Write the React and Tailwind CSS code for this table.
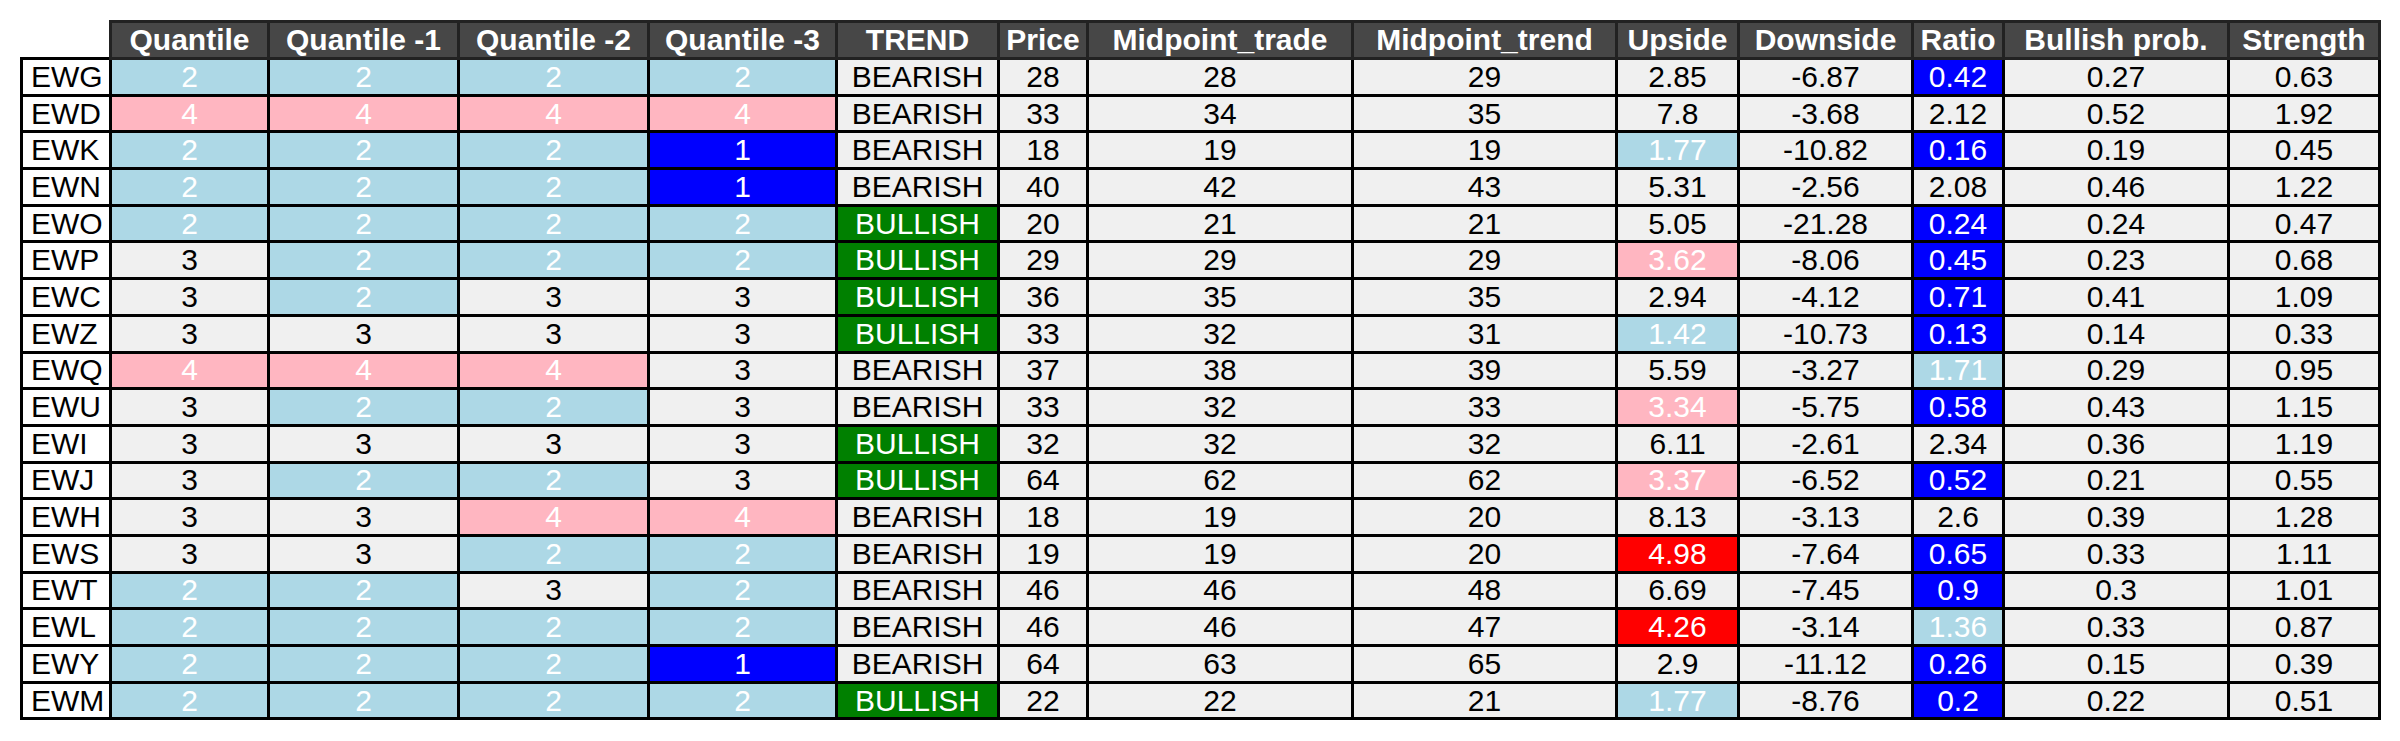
const columns = [
  { label: "Quantile", w: "w-[158px]" },
  { label: "Quantile -1", w: "w-[190px]" },
  { label: "Quantile -2", w: "w-[190px]" },
  { label: "Quantile -3", w: "w-[188px]" },
  { label: "TREND", w: "w-[162px]" },
  { label: "Price", w: "w-[89px]" },
  { label: "Midpoint_trade", w: "w-[265px]" },
  { label: "Midpoint_trend", w: "w-[264px]" },
  { label: "Upside", w: "w-[122px]" },
  { label: "Downside", w: "w-[174px]" },
  { label: "Ratio", w: "w-[91px]" },
  { label: "Bullish prob.", w: "w-[225px]" },
  { label: "Strength", w: "w-[151px]" },
];

// ticker, q, q-1, q-2, q-3, trend, price, mid trade, mid trend, upside, downside, ratio, bullish, strength
const rows = [
  ["EWG", 2, 2, 2, 2, "BEARISH", 28, 28, 29, "2.85", "-6.87", "0.42", "0.27", "0.63"],
  ["EWD", 4, 4, 4, 4, "BEARISH", 33, 34, 35, "7.8", "-3.68", "2.12", "0.52", "1.92"],
  ["EWK", 2, 2, 2, 1, "BEARISH", 18, 19, 19, "1.77", "-10.82", "0.16", "0.19", "0.45"],
  ["EWN", 2, 2, 2, 1, "BEARISH", 40, 42, 43, "5.31", "-2.56", "2.08", "0.46", "1.22"],
  ["EWO", 2, 2, 2, 2, "BULLISH", 20, 21, 21, "5.05", "-21.28", "0.24", "0.24", "0.47"],
  ["EWP", 3, 2, 2, 2, "BULLISH", 29, 29, 29, "3.62", "-8.06", "0.45", "0.23", "0.68"],
  ["EWC", 3, 2, 3, 3, "BULLISH", 36, 35, 35, "2.94", "-4.12", "0.71", "0.41", "1.09"],
  ["EWZ", 3, 3, 3, 3, "BULLISH", 33, 32, 31, "1.42", "-10.73", "0.13", "0.14", "0.33"],
  ["EWQ", 4, 4, 4, 3, "BEARISH", 37, 38, 39, "5.59", "-3.27", "1.71", "0.29", "0.95"],
  ["EWU", 3, 2, 2, 3, "BEARISH", 33, 32, 33, "3.34", "-5.75", "0.58", "0.43", "1.15"],
  ["EWI", 3, 3, 3, 3, "BULLISH", 32, 32, 32, "6.11", "-2.61", "2.34", "0.36", "1.19"],
  ["EWJ", 3, 2, 2, 3, "BULLISH", 64, 62, 62, "3.37", "-6.52", "0.52", "0.21", "0.55"],
  ["EWH", 3, 3, 4, 4, "BEARISH", 18, 19, 20, "8.13", "-3.13", "2.6", "0.39", "1.28"],
  ["EWS", 3, 3, 2, 2, "BEARISH", 19, 19, 20, "4.98", "-7.64", "0.65", "0.33", "1.11"],
  ["EWT", 2, 2, 3, 2, "BEARISH", 46, 46, 48, "6.69", "-7.45", "0.9", "0.3", "1.01"],
  ["EWL", 2, 2, 2, 2, "BEARISH", 46, 46, 47, "4.26", "-3.14", "1.36", "0.33", "0.87"],
  ["EWY", 2, 2, 2, 1, "BEARISH", 64, 63, 65, "2.9", "-11.12", "0.26", "0.15", "0.39"],
  ["EWM", 2, 2, 2, 2, "BULLISH", 22, 22, 21, "1.77", "-8.76", "0.2", "0.22", "0.51"],
];

const tones = {
  plain: "bg-[#f0f0f0] text-black",
  sky: "bg-[#add8e6] text-white",
  pink: "bg-[#ffb6c1] text-white",
  blue: "bg-[#0000ff] text-white",
  red: "bg-[#ff0000] text-white",
  green: "bg-[#008000] text-white",
};

const quantileTone = { 1: "blue", 2: "sky", 3: "plain", 4: "pink" };

function upsideTone(v) {
  const n = parseFloat(v);
  if (n < 2) return "sky";
  if (n < 3.7 && n > 3) return "pink";
  if (n > 4 && n < 5) return "red";
  return "plain";
}

function ratioTone(v) {
  const n = parseFloat(v);
  if (n < 1) return "blue";
  if (n < 2) return "sky";
  return "plain";
}

function Cell({ tone = "plain", children }) {
  return (
    <td className={`border-[3px] border-black text-center p-0 ${tones[tone]}`}>{children}</td>
  );
}

export default function App() {
  return (
    <div className="bg-white w-[2400px] h-[741px] pt-[20px] pl-[20px] font-['Liberation_Sans',Arial,sans-serif]">
      <table className="border-collapse table-fixed text-[30px] leading-none">
        <thead>
          <tr className="h-[37px]">
            <th className="w-[89px] p-0 border-0 bg-white"></th>
            {columns.map((c) => (
              <th
                key={c.label}
                className={`${c.w} p-0 border-[3px] border-[#222] bg-[#474747] text-white font-bold whitespace-nowrap`}
              >
                {c.label}
              </th>
            ))}
          </tr>
        </thead>
        <tbody>
          {rows.map((r) => (
            <tr key={r[0]} className="h-[36.7px]">
              <td className="border-[3px] border-black bg-white text-black text-left pl-[8px] p-0">{r[0]}</td>
              {[1, 2, 3, 4].map((i) => (
                <Cell key={i} tone={quantileTone[r[i]]}>{r[i]}</Cell>
              ))}
              <Cell tone={r[5] === "BULLISH" ? "green" : "plain"}>{r[5]}</Cell>
              <Cell>{r[6]}</Cell>
              <Cell>{r[7]}</Cell>
              <Cell>{r[8]}</Cell>
              <Cell tone={upsideTone(r[9])}>{r[9]}</Cell>
              <Cell>{r[10]}</Cell>
              <Cell tone={ratioTone(r[11])}>{r[11]}</Cell>
              <Cell>{r[12]}</Cell>
              <Cell>{r[13]}</Cell>
            </tr>
          ))}
        </tbody>
      </table>
    </div>
  );
}
